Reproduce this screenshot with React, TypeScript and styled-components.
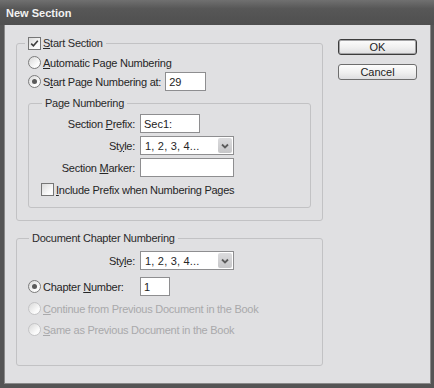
import React from "react";
import styled, { createGlobalStyle } from "styled-components";

const GlobalStyle = createGlobalStyle`
  html, body {
    margin: 0;
    padding: 0;
    background: #e0e0e2;
  }
  body {
    font-family: "Liberation Sans", Arial, sans-serif;
    font-size: 11px;
    letter-spacing: -0.25px;
    color: #262626;
  }
`;

const Window = styled.div`
  width: 434px;
  height: 388px;
  display: flex;
  flex-direction: column;
  background: #e0e0e2;
`;

const TitleBar = styled.div`
  height: 25px;
  flex: none;
  display: flex;
  align-items: center;
  padding-left: 6px;
  background: linear-gradient(#707070, #575757 35%, #4f4f4f);
  color: #f2f2f2;
  font-weight: bold;
  font-size: 11px;
  letter-spacing: 0;
`;

const Body = styled.div`
  flex: 1;
  display: flex;
  padding: 11px 14px 0 12px;
  border-left: 4px solid #555;
  border-right: 3px solid #555;
  border-bottom: 4px solid #555;
  box-shadow: inset 1px 0 0 #8a8a8a, inset -1px 0 0 #8a8a8a, inset 0 -1px 0 #8a8a8a;
`;

const Main = styled.div`
  width: 307px;
  display: flex;
  flex-direction: column;
`;

const Group = styled.fieldset<{ $pt: number; $pb: number; $px: number; $mt?: number }>`
  margin: ${(p) => p.$mt ?? 0}px 0 0;
  min-width: 0;
  padding: ${(p) => p.$pt}px ${(p) => p.$px}px ${(p) => p.$pb}px;
  border: 1px solid #c2c2c4;
  border-radius: 3px;
  display: flex;
  flex-direction: column;
`;

const Legend = styled.legend<{ $ml: number }>`
  margin-left: ${(p) => p.$ml}px;
  padding: 0 3px;
  height: 14px;
  line-height: 14px;
  display: flex;
  align-items: center;
  gap: 2px;
  color: #2a2a2a;
`;

const Key = styled.span`
  text-decoration: underline;
  text-underline-offset: 1px;
`;

const OptionRow = styled.label<{ $h: number; $disabled?: boolean; $mt?: number; $ml?: number }>`
  display: flex;
  align-items: center;
  gap: 2px;
  height: ${(p) => p.$h}px;
  margin-top: ${(p) => p.$mt ?? 0}px;
  margin-left: ${(p) => p.$ml ?? 0}px;
  color: ${(p) => (p.$disabled ? "#a9a9ab" : "inherit")};
  white-space: nowrap;
`;

const Radio = styled.span<{ $checked?: boolean; $disabled?: boolean }>`
  flex: none;
  width: 11px;
  height: 11px;
  border-radius: 50%;
  border: 1px solid ${(p) => (p.$disabled ? "#c4c4c6" : "#7c7c7c")};
  background: linear-gradient(135deg, #d8d8d8, #fbfbfb 70%);
  display: inline-flex;
  align-items: center;
  justify-content: center;

  &::after {
    content: "";
    display: ${(p) => (p.$checked ? "block" : "none")};
    width: 5px;
    height: 5px;
    border-radius: 50%;
    background: #5a5a5a;
  }
`;

const CheckBox = styled.span`
  flex: none;
  width: 11px;
  height: 11px;
  border: 1px solid #767676;
  background: linear-gradient(135deg, #dadada, #fbfbfb 70%);
  display: inline-flex;
  align-items: center;
  justify-content: center;
`;

const FieldGrid = styled.div<{ $label: number; $rowGap: number }>`
  display: grid;
  grid-template-columns: ${(p) => p.$label}px auto;
  column-gap: 5px;
  row-gap: ${(p) => p.$rowGap}px;
  align-items: center;
  justify-items: start;
`;

const FieldLabel = styled.span`
  justify-self: end;
  white-space: nowrap;
`;

const FullRow = styled.div`
  grid-column: 1 / -1;
`;

const TextBox = styled.input<{ $w: number; $ml?: number }>`
  width: ${(p) => p.$w}px;
  height: 19px;
  box-sizing: border-box;
  margin: 0 0 0 ${(p) => p.$ml ?? 0}px;
  padding: 0 3px;
  border: 1px solid #8e8e90;
  background: #fff;
  font: inherit;
  letter-spacing: 0;
  color: #222;
  outline: none;
`;

const Select = styled.div<{ $w: number }>`
  width: ${(p) => p.$w}px;
  height: 19px;
  box-sizing: border-box;
  border: 1px solid #8e8e90;
  background: #fff;
  display: flex;
  align-items: stretch;
  padding: 1px;
`;

const SelectValue = styled.span`
  flex: 1;
  display: flex;
  align-items: center;
  padding-left: 3px;
  letter-spacing: 0.2px;
`;

const DropButton = styled.span`
  width: 14px;
  border-radius: 2px;
  background: linear-gradient(#dcdcde, #c6c6c8);
  display: flex;
  align-items: center;
  justify-content: center;
`;

const Side = styled.div`
  width: 79px;
  margin-left: 15px;
  padding-top: 3px;
  display: flex;
  flex-direction: column;
  gap: 9px;
`;

const Button = styled.button<{ $default?: boolean }>`
  width: 79px;
  height: 16px;
  padding: 0;
  border-radius: 3px;
  border: 1px solid ${(p) => (p.$default ? "#3c3c3c" : "#6e6e6e")};
  box-shadow: ${(p) => (p.$default ? "inset 0 0 0 1px #a4a4a6" : "none")};
  background: linear-gradient(#fdfdfd, #efefef 55%, #dedee0);
  font: inherit;
  letter-spacing: 0;
  color: #222;
  display: flex;
  align-items: center;
  justify-content: center;
`;

const Check = () => (
  <svg width="9" height="9" viewBox="0 0 9 9">
    <polyline points="1.2,4.6 3.4,6.8 7.8,1.8" fill="none" stroke="#3e3e3e" strokeWidth="1.6" />
  </svg>
);

const Chevron = () => (
  <svg width="8" height="6" viewBox="0 0 8 6">
    <polyline points="1,1.5 4,4.5 7,1.5" fill="none" stroke="#5c5c5c" strokeWidth="1.8" />
  </svg>
);

const StyleSelect = () => (
  <Select $w={94}>
    <SelectValue>1, 2, 3, 4...</SelectValue>
    <DropButton>
      <Chevron />
    </DropButton>
  </Select>
);

export default function App() {
  return (
    <>
      <GlobalStyle />
      <Window>
        <TitleBar>New Section</TitleBar>
        <Body>
          <Main>
            <Group $pt={3} $pb={12} $px={11}>
              <Legend $ml={-3}>
                <CheckBox>
                  <Check />
                </CheckBox>
                <span>
                  <Key>S</Key>tart Section
                </span>
              </Legend>
              <OptionRow $h={19}>
                <Radio />
                <span>
                  <Key>A</Key>utomatic Page Numbering
                </span>
              </OptionRow>
              <OptionRow $h={19}>
                <Radio $checked />
                <span>
                  S<Key>t</Key>art Page Numbering at:
                </span>
                <TextBox $w={41} $ml={2} defaultValue="29" />
              </OptionRow>

              <Group $pt={4} $pb={8} $px={0} $mt={5}>
                <Legend $ml={13}>Page Numbering</Legend>
                <FieldGrid $label={106} $rowGap={3}>
                  <FieldLabel>
                    Section <Key>P</Key>refix:
                  </FieldLabel>
                  <TextBox $w={60} defaultValue="Sec1:" />
                  <FieldLabel>
                    St<Key>y</Key>le:
                  </FieldLabel>
                  <StyleSelect />
                  <FieldLabel>
                    Section <Key>M</Key>arker:
                  </FieldLabel>
                  <TextBox $w={94} defaultValue="" />
                  <FullRow>
                    <OptionRow $h={19} $ml={12}>
                      <CheckBox />
                      <span>
                        <Key>I</Key>nclude Prefix when Numbering Pages
                      </span>
                    </OptionRow>
                  </FullRow>
                </FieldGrid>
              </Group>
            </Group>

            <Group $pt={6} $pb={25} $px={11} $mt={10}>
              <Legend $ml={1}>Document Chapter Numbering</Legend>
              <FieldGrid $label={107} $rowGap={7}>
                <FieldLabel>
                  Sty<Key>l</Key>e:
                </FieldLabel>
                <StyleSelect />
                <OptionRow $h={19}>
                  <Radio $checked />
                  <span>
                    Chapter <Key>N</Key>umber:
                  </span>
                </OptionRow>
                <TextBox $w={30} defaultValue="1" />
              </FieldGrid>
              <OptionRow $h={21} $mt={2} $disabled>
                <Radio $disabled />
                <span>
                  <Key>C</Key>ontinue from Previous Document in the Book
                </span>
              </OptionRow>
              <OptionRow $h={21} $disabled>
                <Radio $disabled />
                <span>
                  <Key>S</Key>ame as Previous Document in the Book
                </span>
              </OptionRow>
            </Group>
          </Main>

          <Side>
            <Button $default>OK</Button>
            <Button>Cancel</Button>
          </Side>
        </Body>
      </Window>
    </>
  );
}
